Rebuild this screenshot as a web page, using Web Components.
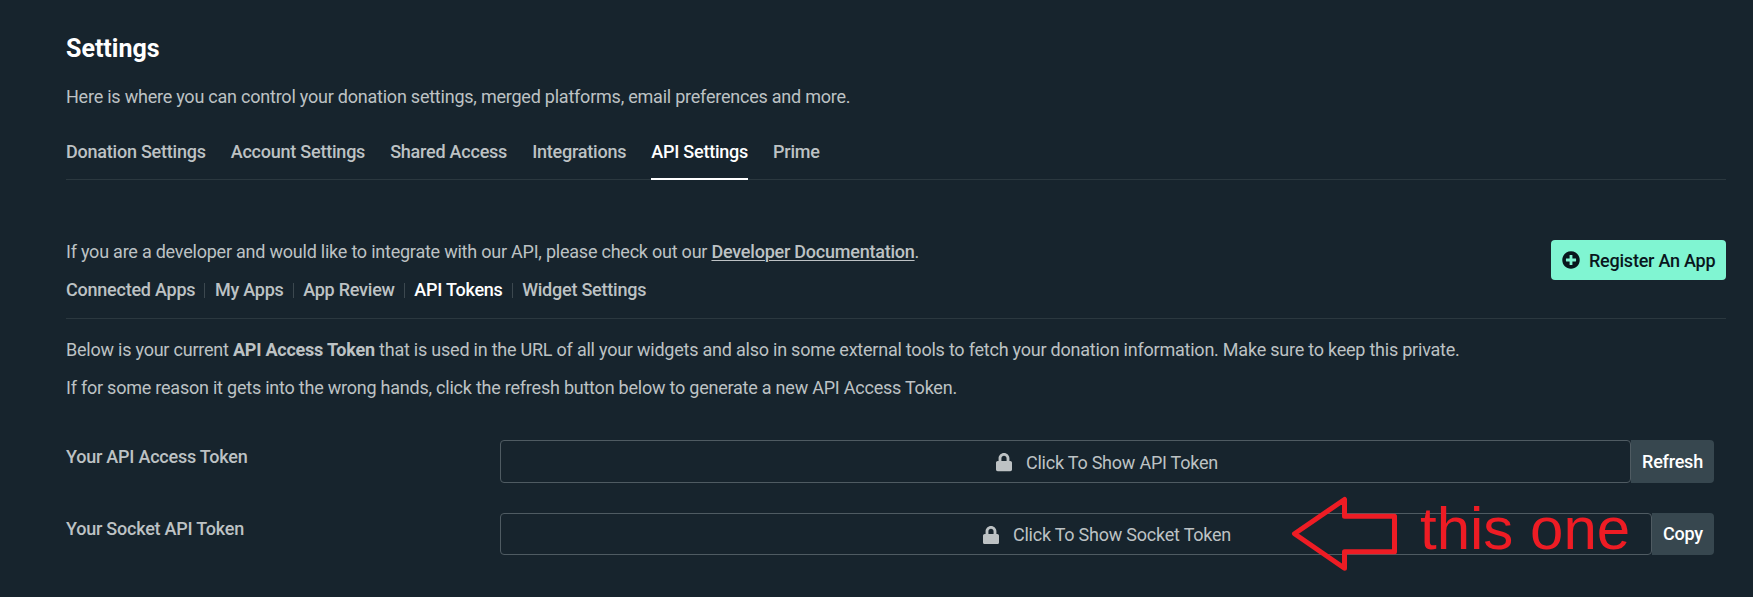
<!DOCTYPE html>
<html lang="en">
<head>
<meta charset="utf-8">
<title>Settings</title>
<style>
html,body{margin:0;height:100%;background:#17242d}
body{font-family:Roboto,"Liberation Sans",sans-serif;font-size:18px;line-height:26px;letter-spacing:-.227px;color:#bdc2c4;overflow:hidden}
</style>
</head>
<body>
<settings-page></settings-page>
<script>
const define = (name, html) => customElements.define(name, class extends HTMLElement {
  constructor() {
    super();
    const t = document.createElement('template');
    t.innerHTML = html;
    this.attachShadow({mode: 'open'}).append(t.content.cloneNode(true));
  }
});

define('tab-item', `<style>
:host{display:block;font-weight:500;padding-bottom:13px;border-bottom:2px solid transparent;margin-bottom:-1px;white-space:nowrap}
:host([active]){color:#fff;border-color:#fff}
</style><slot></slot>`);

define('tab-bar', `<style>
:host{display:flex;gap:25px;height:40px;border-bottom:1px solid #2b383f;margin-top:29px}
</style><slot></slot>`);

define('sub-item', `<style>
:host{display:flex;align-items:center;font-weight:500;white-space:nowrap}
:host([active]){color:#fff}
:host(:not(:last-child))::after{content:"";width:1px;height:15px;background:#3c484f;margin:0 9.500px 0 9px}
</style><slot></slot>`);

define('sub-nav', `<style>:host{display:flex;margin-top:12px}</style><slot></slot>`);

define('text-line', `<style>:host{display:block;white-space:nowrap}</style><slot></slot>`);

define('doc-link', `<style>:host{display:inline;font-weight:500;text-decoration:underline;text-decoration-thickness:1px;text-underline-offset:2px}</style><slot></slot>`);

define('register-button', `<style>
:host{display:flex;box-sizing:border-box;width:175px;height:40px;align-items:center;padding-left:11px;gap:9px;border-radius:4px;background:#80f5d2;color:#09161d;font-weight:500;white-space:nowrap;margin-top:1px}
svg{width:18px;height:18px;flex:none}
span{padding-top:2px}
</style><svg viewBox="0 0 512 512"><path fill="currentColor" d="M256 8C119 8 8 119 8 256s111 248 248 248 248-111 248-248S393 8 256 8zm144 276c0 6.600-5.400 12-12 12h-92v92c0 6.600-5.400 12-12 12h-56c-6.600 0-12-5.400-12-12v-92h-92c-6.600 0-12-5.400-12-12v-56c0-6.600 5.400-12 12-12h92v-92c0-6.600 5.400-12 12-12h56c6.600 0 12 5.400 12 12v92h92c6.600 0 12 5.400 12 12v56z"/></svg><span><slot></slot></span>`);

define('token-field', `<style>
:host{display:flex;flex:1;box-sizing:border-box;align-items:center;justify-content:center;gap:14px;border:1px solid #4f5b62;border-radius:4px;white-space:nowrap;padding:2px 0 0 var(--balance,0)}
svg{width:16px;height:18.300px;flex:none}
</style><svg viewBox="0 0 448 512"><path fill="currentColor" d="M400 224h-24v-72C376 68.200 307.800 0 224 0S72 68.200 72 152v72H48c-26.500 0-48 21.500-48 48v192c0 26.500 21.500 48 48 48h352c26.500 0 48-21.500 48-48V272c0-26.500-21.500-48-48-48zm-104 0H152v-72c0-39.700 32.300-72 72-72s72 32.300 72 72v72z"/></svg><slot></slot>`);

define('side-button', `<style>
:host{display:flex;align-items:center;justify-content:center;background:#37474f;color:#fff;font-weight:500;border-radius:0 4px 4px 0;flex:none}
</style><slot></slot>`);

define('form-row', `<style>
:host{display:grid;grid-template-columns:434px 1fr}
.l{font-weight:500;padding-top:var(--label-top,4px)}
.f{display:flex}
</style><div class="l"><slot name="label"></slot></div><div class="f"><slot></slot></div>`);

define('arrow-note', `<style>
:host{position:absolute;left:1288px;top:492px;width:350px;height:84px;color:#ee1c24}
svg{position:absolute;left:0;top:0}
span{position:absolute;left:132px;top:3px;font:60px/68px "Liberation Sans",Arial,sans-serif;letter-spacing:0;white-space:nowrap}
</style><svg width="112" height="84"><path d="M6.500 41.700 56.500 7.500V24.200H106.500V59.700H56.500V76.300Z" fill="none" stroke="currentColor" stroke-width="5" stroke-linejoin="round"/></svg><span><slot></slot></span>`);

define('settings-page', `<style>
:host{display:block;box-sizing:border-box;height:597px;padding:34px 27px 0 66px}
h1{margin:0;font-size:25px;line-height:30px;font-weight:700;letter-spacing:0;color:#fff}
.intro{margin-top:20px}
.dev{display:flex;justify-content:space-between;height:78px;margin-top:59px;border-bottom:1px solid #2b383f;padding-bottom:1px}
.p1{margin-top:18px}.p2{margin-top:12px}
.r1{height:43px;margin:39px 12px 0 0;--balance:83px}
.r2{height:42px;margin:30px 12px 0 0;--balance:62px;--label-top:3px}
.r1 side-button{width:83px}.r2 side-button{width:62px}
</style>
<h1>Settings</h1>
<text-line class="intro">Here is where you can control your donation settings, merged platforms, email preferences and more.</text-line>
<tab-bar><tab-item>Donation Settings</tab-item><tab-item>Account Settings</tab-item><tab-item>Shared Access</tab-item><tab-item>Integrations</tab-item><tab-item active>API Settings</tab-item><tab-item>Prime</tab-item></tab-bar>
<div class="dev"><div><text-line>If you are a developer and would like to integrate with our API, please check out our <doc-link>Developer Documentation</doc-link>.</text-line>
<sub-nav><sub-item>Connected Apps</sub-item><sub-item>My Apps</sub-item><sub-item>App Review</sub-item><sub-item active>API Tokens</sub-item><sub-item>Widget Settings</sub-item></sub-nav></div>
<register-button>Register An App</register-button></div>
<text-line class="p1">Below is your current <b>API Access Token</b> that is used in the URL of all your widgets and also in some external tools to fetch your donation information. Make sure to keep this private.</text-line>
<text-line class="p2">If for some reason it gets into the wrong hands, click the refresh button below to generate a new API Access Token.</text-line>
<form-row class="r1"><span slot="label">Your API Access Token</span><token-field>Click To Show API Token</token-field><side-button>Refresh</side-button></form-row>
<form-row class="r2"><span slot="label">Your Socket API Token</span><token-field>Click To Show Socket Token</token-field><side-button>Copy</side-button></form-row>
<arrow-note>this one</arrow-note>`);
</script>
</body>
</html>
